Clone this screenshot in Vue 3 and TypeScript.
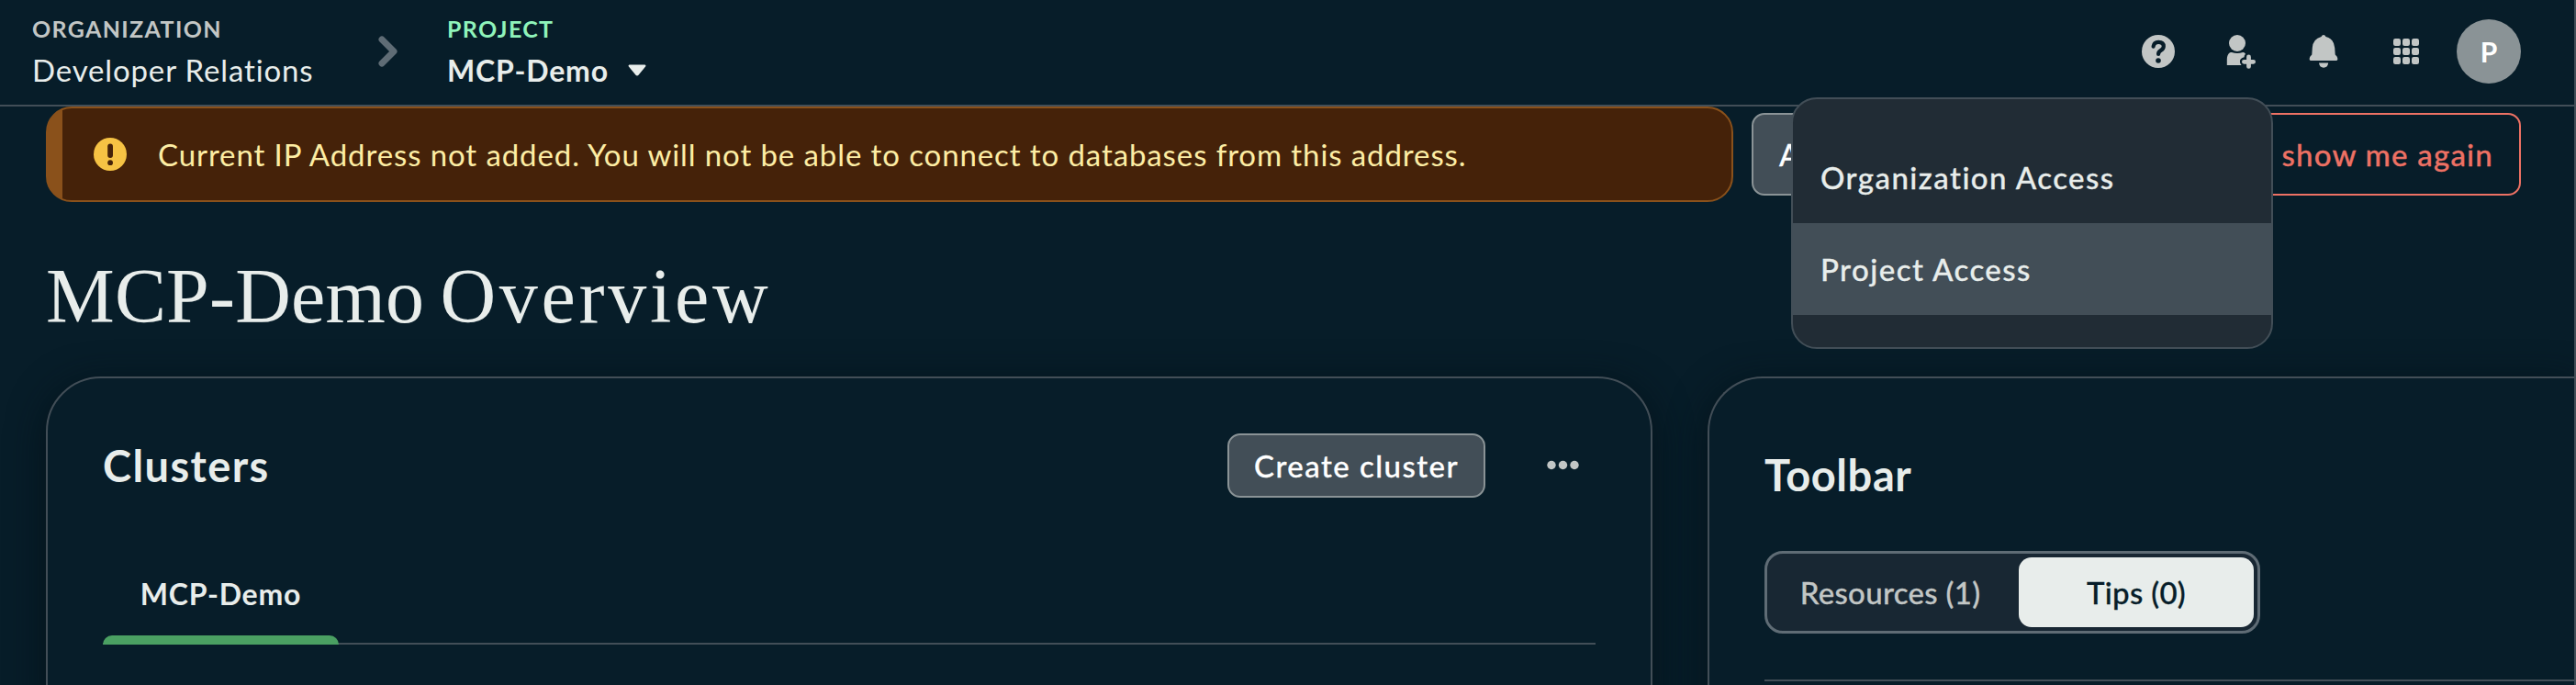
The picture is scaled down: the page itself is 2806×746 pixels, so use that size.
<script setup lang="ts">
interface MenuItem {
  label: string
  active: boolean
}

const menuItems: MenuItem[] = [
  { label: 'Organization Access', active: false },
  { label: 'Project Access', active: true },
]
</script>

<template>
  <div class="app">
    <header class="topbar">
      <div class="crumb org">
        <div class="eyebrow">ORGANIZATION</div>
        <div class="name">Developer Relations</div>
      </div>
      <svg class="chevron" viewBox="0 0 22 34" width="22" height="34"><path d="M4 4 L17 17 L4 30" fill="none" stroke="#5f6c75" stroke-width="7" stroke-linecap="round" stroke-linejoin="round" /></svg>
      <div class="crumb project">
        <div class="eyebrow">PROJECT</div>
        <div class="name">
          <span>MCP-Demo</span>
          <svg class="caret" viewBox="0 0 20 13" width="20" height="13"><path d="M1.5 0.5h17q1.5 0.6 0.6 2l-7.6 9.2q-1.5 1.6-3 0l-7.6-9.2q-0.9-1.4 0.6-2z" fill="#e8edeb" /></svg>
        </div>
      </div>
      <nav class="tools">
        <svg viewBox="0 0 40 40" width="40" height="40"><circle cx="20" cy="20" r="18" fill="#c2c6c5" /><path d="M14.6 14.6q0.600-4.800 5.600-4.800q5.600 0 5.600 4.700q0 2.600-3 4.400q-2.700 1.600-2.700 4" fill="none" stroke="#071d29" stroke-width="4.200" stroke-linecap="round" /><circle cx="20" cy="30" r="2.800" fill="#071d29" /></svg>
        <svg viewBox="0 0 40 40" width="40" height="40"><g fill="#c2c6c5"><circle cx="16" cy="11" r="9" /><path d="M4.800 35v-6.500q0-5 3.200-7.200q1-0.600 2-0.200q6 2 12 0q1.200-0.300 2.200 0.700l0.800 0.900q-1.500 1.200-1.500 3.600q-4.600 0.900-4.600 4.700q0 2.500 1.700 4z" /><path d="M28.500 23.600a2.400 2.400 0 0 1 2.400 2.400v2.900h2.700a2.400 2.400 0 0 1 0 4.800h-2.700v2.700a2.400 2.400 0 0 1-4.800 0v-2.700h-2.700a2.400 2.400 0 0 1 0-4.800h2.700v-2.900a2.400 2.400 0 0 1 2.400-2.400z" /></g></svg>
        <svg viewBox="0 0 40 40" width="40" height="40"><g fill="#c2c6c5"><path d="M20 2q1.600 0 2.500 2q9 2.400 9.700 12l0.500 7.500l2 2.300q1.600 4-0.700 4.200h-28q-2.300-0.200-0.700-4.200l2-2.300l0.500-7.500q0.700-9.600 9.700-12q0.900-2 2.500-2z" /><path d="M15 32.500h10.200q-0.800 5.200-5.100 5.200t-5.100-5.200z" /></g></svg>
        <svg viewBox="0 0 40 40" width="40" height="40"><g fill="#c2c6c5"><template v-for="r in 3" :key="r"><rect v-for="c in 3" :key="c" :x="6 + (c - 1) * 10" :y="6 + (r - 1) * 10" width="8" height="8" rx="2.200" /></template></g></svg>
        <div class="avatar">P</div>
      </nav>
    </header>

    <main class="main">
      <section class="alert-row">
        <div class="banner">
          <svg viewBox="0 0 36 36" width="36" height="36"><circle cx="18" cy="18" r="18" fill="#f6c344" /><rect x="15.200" y="6.500" width="5.800" height="15.500" rx="2.900" fill="#452209" /><circle cx="18.100" cy="27.200" r="2.900" fill="#452209" /></svg>
          <span class="banner-text">Current IP Address not added. You will not be able to connect to databases from this address.</span>
        </div>
        <div class="alert-actions">
          <button class="btn add-ip">A</button>
          <button class="btn dismiss">Don't show me again</button>
        </div>
      </section>

      <h1 class="title"><span class="title-project">MCP-Demo </span>Overview</h1>

      <section class="cards">
        <article class="card clusters">
          <div class="card-head">
            <h2 class="heading">Clusters</h2>
            <button class="btn create">Create cluster</button>
            <svg viewBox="0 0 72 40" width="72" height="40"><g fill="#c2c6c5"><circle cx="24" cy="19.500" r="4.700" /><circle cx="36.500" cy="19.500" r="4.700" /><circle cx="49" cy="19.500" r="4.700" /></g></svg>
          </div>
          <div class="tabs">
            <div class="tab">
              <span class="tab-label">MCP-Demo</span>
              <div class="tab-bar"></div>
            </div>
          </div>
        </article>
        <article class="card toolbar">
          <h2 class="heading">Toolbar</h2>
          <div class="segments">
            <div class="segment">Resources (1)</div>
            <div class="segment selected">Tips (0)</div>
          </div>
          <div class="rule"></div>
        </article>
      </section>
    </main>

    <div class="menu">
      <div v-for="item in menuItems" :key="item.label" class="menu-item" :class="{ active: item.active }">{{ item.label }}</div>
    </div>
  </div>
</template>

<style>
body { margin: 0; background: #071d29; overflow: hidden; }
</style>

<style scoped>
* { box-sizing: border-box; }
.app {
  position: relative;
  width: 2806px;
  height: 746px;
  overflow: hidden;
  background: #071d29;
  border-right: 2px solid #424e57;
  color: #e8edeb;
  font-family: Lato, "Open Sans", sans-serif;
  font-size: 33px;
  white-space: nowrap;
}

.topbar { display: flex; height: 116px; border-bottom: 2px solid #424e57; padding: 0 58px 0 35px; }
.crumb { padding-top: 14px; }
.org { width: 377px; }
.eyebrow { font-size: 25px; line-height: 34px; font-weight: 700; letter-spacing: 1.35px; color: #c2c6c5; }
.name { display: flex; align-items: center; height: 44px; margin-top: 6px; letter-spacing: 0.85px; }
.project .eyebrow { color: #8ff3ba; }
.project .name { font-weight: 700; font-size: 32px; letter-spacing: 0.85px; }
.chevron { margin: 39px 53px 0 0; }
.caret { margin-left: 21px; }
.tools { margin-left: auto; display: flex; align-items: center; gap: 50px; padding-bottom: 2px; }
.avatar {
  width: 70px;
  height: 70px;
  margin-left: -15px;
  border-radius: 50%;
  background: #8a9396;
  color: #fff;
  font-weight: 700;
  font-size: 30px;
  line-height: 70px;
  text-align: center;
}

.main { padding-left: 50px; }
.alert-row { display: flex; gap: 20px; height: 104px; margin-right: 58px; }
.banner {
  display: flex;
  align-items: center;
  width: 1838px;
  padding-left: 50px;
  border: 2px solid #8a511b;
  border-radius: 28px;
  background: linear-gradient(to right, #8a511b 16px, #452209 16px);
  color: #fdeda4;
}
.banner-text { margin-left: 34px; letter-spacing: 0.9px; }
.alert-actions { flex: 1; display: flex; align-items: center; justify-content: space-between; }
.btn {
  height: 90px;
  padding: 0 28px;
  border: 2px solid #8a9396;
  border-radius: 14px;
  background: #424e57;
  color: #fff;
  font: 500 33px Lato, "Open Sans", sans-serif;
  letter-spacing: 1.2px;
  -webkit-text-stroke: 0.3px currentColor;
  white-space: nowrap;
}
.add-ip { width: 400px; text-align: left; }
.dismiss { background: transparent; border-color: #ed7164; color: #ed7164; }

.title {
  height: 190px;
  margin: 0;
  padding-top: 15px;
  font: 400 84px/176px "Liberation Serif", serif;
  letter-spacing: 3.7px;
}
.title-project { letter-spacing: 0.2px; word-spacing: -4px; }

.cards { display: flex; gap: 60px; }
.card {
  flex: none;
  height: 400px;
  padding: 60px 60px 0;
  border: 2px solid #424e57;
  border-radius: 60px;
  background: #071d29;
  box-shadow: 0 8px 40px rgba(4, 16, 22, 0.8);
}
.heading { margin: 0; font-size: 47px; font-weight: 700; line-height: 70px; letter-spacing: 1.4px; }
.clusters { width: 1750px; }
.card-head { display: flex; align-items: center; height: 70px; }
.create { height: 70px; width: 281px; margin: 0 48px 0 auto; padding: 0; letter-spacing: 1.45px; }
.tabs { height: 102px; margin-top: 58px; border-bottom: 2px solid #424e57; }
.tab { width: 257px; height: 102px; text-align: center; font-size: 32px; font-weight: 700; letter-spacing: 0.8px; }
.tab-label { display: block; height: 92px; line-height: 94px; }
.tab-bar { height: 10px; border-radius: 10px 10px 0 0; background: #4aa062; }

.toolbar { width: 944px; padding-right: 0; border-right: 0; border-radius: 60px 0 0 0; }
.toolbar .heading { margin-top: 10px; letter-spacing: 0.6px; }
.segments {
  display: flex;
  width: 540px;
  height: 90px;
  margin-top: 48px;
  padding: 4px;
  border: 3px solid #5f6c75;
  border-radius: 20px;
  background: #182733;
  color: #c2c6c5;
  font-weight: 500;
  letter-spacing: 0.3px;
  -webkit-text-stroke: 0.3px currentColor;
}
.segment { flex: 1; padding-right: 10px; text-align: center; line-height: 77px; }
.selected { flex: 0 0 256px; padding: 0; border-radius: 14px; background: #e8edeb; color: #071d29; }
.rule { height: 2px; margin-top: 50px; background: #424e57; }

.menu {
  position: absolute;
  left: 1951px;
  top: 106px;
  width: 525px;
  height: 274px;
  padding-top: 35px;
  border: 2px solid #424e57;
  border-radius: 28px;
  background: #212c35;
  font-weight: 500;
  letter-spacing: 1.45px;
  -webkit-text-stroke: 0.3px currentColor;
}
.menu-item { height: 100px; padding-left: 30px; line-height: 100px; }
.menu-item.active { background: #424e57; }
</style>
